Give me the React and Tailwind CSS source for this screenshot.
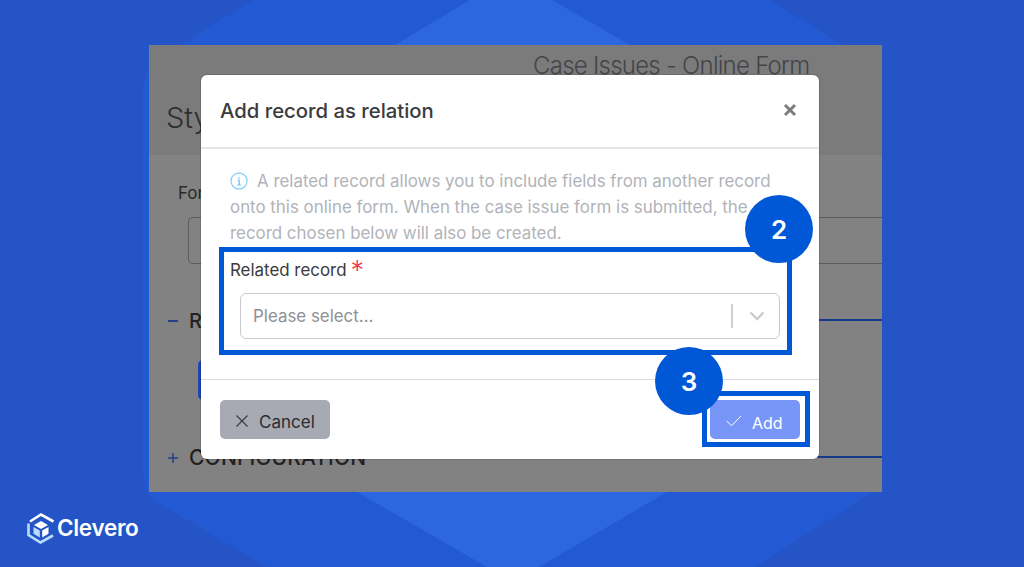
const inter = "font-['Inter','Liberation_Sans',sans-serif]";

function Background() {
  return (
    <svg className="absolute inset-0" width="1024" height="567" viewBox="0 0 1024 567">
      <path d="M253 0 L769 0 L882 68 L882 486 L755 567 L267 567 L160 504 Q143 494 143 470 L143 90 Q143 72 160 57 Z" fill="#2459d4" />
      <polygon points="470,0 552,0 630,45 667,492 539,567 487,567 357,492 395,45" fill="#2c67df" />
    </svg>
  );
}

function LogoMark() {
  return (
    <svg width="28" height="32" viewBox="0 0 28 32" fill="none">
      <path d="M3 9.5 L14 2.5 L26.5 9.5" stroke="#ffffff" strokeWidth="2.6" fill="none" />
      <path d="M1.5 11.5 L1.5 23 L13.5 30.5 L26 23.5" stroke="#b9dcfb" strokeWidth="2.6" fill="none" />
      <path d="M14 9 L21 13 L14 17 L7 13 Z" fill="#ffffff" />
      <path d="M6.5 15 L12.8 18.6 L12.8 25.5 L6.5 21.8 Z" fill="#b9dcfb" />
      <path d="M21.5 15 L15.2 18.6 L15.2 25.5 L21.5 21.8 Z" fill="#ffffff" />
    </svg>
  );
}

function Screen() {
  return (
    <div className="relative z-10 ml-[149px] w-[733px] h-[447px] overflow-hidden bg-[#828282]">
      <div className="h-[110px] bg-[#7b7b7b] flex flex-col">
        <div className="ml-[384px] mt-[4px] text-[24px] leading-[34px] font-light tracking-[-0.75px] text-[#444548]">Case Issues - Online Form</div>
        <div className="ml-[17px] mt-[15px] text-[29px] leading-[40px] font-light text-[#2e2e2e]">Sty</div>
      </div>
      <div className="pl-[29px] pt-[27px] text-[17px] leading-[22px] text-[#2a2a2a]">For</div>
      <div className="ml-[39px] mt-[14px] -translate-y-px h-[47px] rounded-l-[5px] border border-r-0 border-[#5c5c5c]" />
      <div className="mt-[44px] ml-[19px] flex items-center h-[24px]">
        <span className="w-[10px] h-[2px] bg-[#24408f]" />
        <span className="ml-[11px] text-[20px] font-medium text-[#222]">R</span>
        <span className="flex-1 h-[2px] mb-[2px] ml-[8px] bg-[#173a8f]" />
      </div>
      <div className="mt-[27px] ml-[49px] w-[120px] h-[40px] rounded-[5px] bg-[#1c45b5]" />
      <div className="mt-[45px] ml-[19px] flex items-center h-[26px]">
        <svg width="10" height="10" viewBox="0 0 10 10"><path d="M5 0V10M0 5H10" stroke="#24408f" strokeWidth="1.5" /></svg>
        <span className="ml-[11px] text-[21px] font-medium tracking-[0.2px] text-[#222]">CONFIGURATION</span>
        <span className="flex-1 self-end h-[2px] mb-[13px] ml-[8px] bg-[#173a8f]" />
      </div>
    </div>
  );
}

function Modal() {
  return (
    <div className="absolute z-20 left-[201px] top-[75px] w-[618px] h-[384px] rounded-[6px] bg-white flex flex-col shadow-[0_0_0_1px_rgba(0,0,0,0.12)]">
      <div className="h-[74px] shrink-0 border-b-2 border-[#e3e6ea] pl-[19px] pr-[22px] flex items-center justify-between">
        <span className="text-[20.3px] font-medium text-[#3a3b3e] mt-[1px]">Add record as relation</span>
        <svg className="mb-[3px]" width="14" height="14" viewBox="0 0 14 14"><path d="M2 2L12 12M12 2L2 12" stroke="#7d7d7d" strokeWidth="3" /></svg>
      </div>
      <div className="flex-1 pl-[29px] pt-[19px] text-[16.9px] leading-[26px] text-[#b1b3b9]">
        <div className="flex items-center">
          <svg width="18" height="18" viewBox="0 0 18 18" fill="none">
            <circle cx="9" cy="9" r="8" stroke="#8fd3fb" strokeWidth="1.4" />
            <path d="M9 5V6.4M7.6 8.2H9.2V12.6M7.4 12.8H10.8" stroke="#74c6f7" strokeWidth="1.3" />
          </svg>
          <span className="ml-[9px]">A related record allows you to include fields from another record</span>
        </div>
        <div>onto this online form. When the case issue form is submitted, the</div>
        <div>record chosen below will also be created.</div>
        <div className="mt-[12px] flex items-start text-[#3a3b3e] leading-[24px]">
          <span>Related record</span>
          <span className="ml-[4px] text-[27px] leading-[26px] font-light text-[#f0364a]">*</span>
        </div>
        <div className="mt-[9px] ml-[10px] w-[540px] h-[46px] rounded-[6px] border-[1.5px] border-[#c9c9cd] flex items-center pl-[12px] pr-[14px]">
          <span className="flex-1 text-[#8f9095]">Please select...</span>
          <span className="w-[2px] h-[24px] bg-[#cfcfcf]" />
          <svg className="ml-[16px]" width="16" height="10" viewBox="0 0 16 10" fill="none"><path d="M1.5 1.5L8 8L14.5 1.5" stroke="#cccccc" strokeWidth="2.4" /></svg>
        </div>
      </div>
      <div className="h-[80px] shrink-0 border-t border-[#d9d9e0] pl-[19px] pr-[19px] pb-[20px] flex items-end justify-between">
        <div className="w-[110px] h-[39px] rounded-[5px] bg-[#a7aab3] flex items-center pl-[16px] text-[17px] text-[#2b2c30]">
          <svg className="mt-[2px]" width="12" height="12" viewBox="0 0 12 12"><path d="M.5.5L11.5 11.5M11.5.5L.5 11.5" stroke="#3a3b40" strokeWidth="1.2" /></svg>
          <span className="ml-[11px] mt-[6px]">Cancel</span>
        </div>
        <div className="w-[90px] h-[39px] rounded-[5px] bg-[#7896f7] flex items-center pl-[16px] text-[16px] text-white">
          <svg className="mt-[2px]" width="16" height="12" viewBox="0 0 16 12" fill="none"><path d="M.8 6L5.5 10.8L15 1" stroke="#ffffff" strokeWidth="1" /></svg>
          <span className="ml-[10px] mt-[6px]">Add</span>
        </div>
      </div>
    </div>
  );
}

function Badge({ className, children }) {
  return (
    <div className={`absolute z-40 w-[68px] h-[68px] rounded-full bg-[#0058d6] flex items-center justify-center text-[26px] font-semibold text-white ${className}`}>
      {children}
    </div>
  );
}

export default function App() {
  return (
    <div className={`relative w-[1024px] h-[567px] overflow-hidden bg-[#2454c6] pt-[45px] ${inter}`}>
      <Background />
      <Screen />
      <Modal />
      <div className="absolute z-30 left-[219px] top-[247px] w-[573px] h-[108px] border-[5px] border-[#0058d6]" />
      <div className="absolute z-30 left-[702px] top-[391px] w-[108px] h-[56px] border-[5px] border-[#0058d6]" />
      <Badge className="left-[745px] top-[195px]">2</Badge>
      <Badge className="left-[655px] top-[347px]">3</Badge>
      <div className="relative z-10 ml-[27px] mt-[20px] flex items-center">
        <LogoMark />
        <span className="ml-[2px] text-[22.5px] leading-[32px] font-semibold tracking-[-0.3px] text-white">Clevero</span>
      </div>
    </div>
  );
}
